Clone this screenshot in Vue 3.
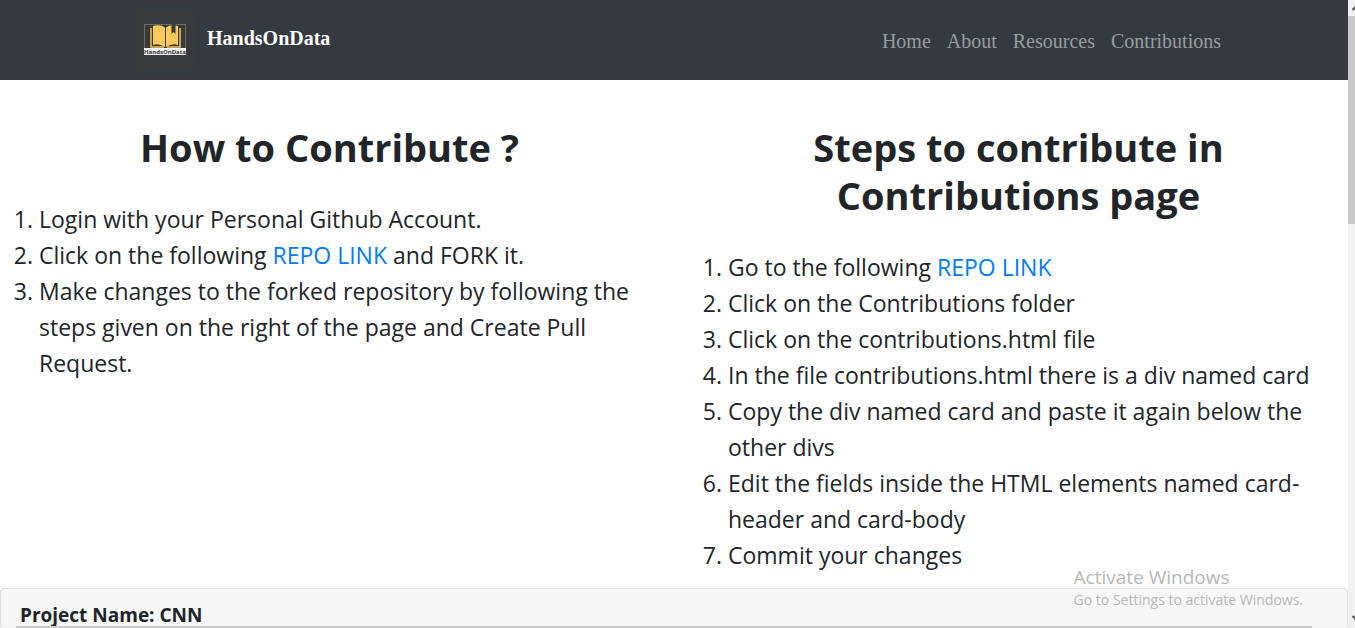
<script setup>
const links = ['Home', 'About', 'Resources', 'Contributions']
const steps = [
  'Click on the Contributions folder',
  'Click on the contributions.html file',
  'In the file contributions.html there is a div named card',
  'Copy the div named card and paste it again below the other divs',
  'Edit the fields inside the HTML elements named card-header and card-body',
  'Commit your changes',
]
</script>

<template>
  <div class="window">
    <div class="page">
      <header class="navbar">
        <div class="container">
          <a class="brand" href="#">
            <svg class="logo" viewBox="0 0 60 60" role="img" aria-label="HandsOnData logo">
              <rect width="60" height="60" fill="#393a3b" />
              <rect x="9.5" y="14.5" width="41" height="30" fill="#393a3b" stroke="#666a6d" />
              <path d="M16 18V37H29M45 18V37H32" fill="none" stroke="#f9c44f" stroke-width="1.5" />
              <path d="M18 16Q25 14 30 17.500V37Q24 33 18 35ZM31 17.500Q35 14 43 16V35Q37 33 31 37Z" fill="#fdc959" />
              <path d="M36.500 14h4v10l-2-2-2 2z" fill="#393a3b" />
              <rect x="9" y="38" width="42" height="7" fill="#f4f4f4" />
              <text x="30" y="43.500" text-anchor="middle" class="logo-text">HandsOnData</text>
            </svg>
            <span>HandsOnData</span>
          </a>
          <nav class="links">
            <a v-for="link in links" :key="link" href="#">{{ link }}</a>
          </nav>
        </div>
      </header>
      <main>
        <div class="columns">
          <section>
            <h1>How to Contribute ?</h1>
            <ol>
              <li>Login with your Personal Github Account.</li>
              <li>Click on the following <a href="#">REPO LINK</a> and FORK it.</li>
              <li>Make changes to the forked repository by following the steps given on the right of the page and Create Pull Request.</li>
            </ol>
          </section>
          <section>
            <h1>Steps to contribute in Contributions page</h1>
            <ol>
              <li>Go to the following <a href="#">REPO LINK</a></li>
              <li v-for="step in steps" :key="step">{{ step }}</li>
            </ol>
          </section>
        </div>
        <article class="card">
          <h2>Project Name: CNN</h2>
        </article>
      </main>
    </div>
    <div class="vbar">
      <svg viewBox="0 0 17 16" width="17" height="16"><path d="M4.500 10l4-4 4 4" fill="none" stroke="#505050" stroke-width="2" /></svg>
      <div class="track"><div class="vthumb"></div></div>
      <svg viewBox="0 0 17 16" width="17" height="16"><path d="M4.500 6l4 4 4-4" fill="none" stroke="#505050" stroke-width="2" /></svg>
    </div>
    <div class="hbar"><div class="hthumb"></div></div>
    <aside class="notice">
      <strong>Activate Windows</strong>
      <span>Go to Settings to activate Windows.</span>
    </aside>
  </div>
</template>

<style>
body {
  margin: 0;
}
</style>

<style scoped>
* {
  box-sizing: border-box;
}
.window {
  position: relative;
  display: grid;
  grid-template-columns: minmax(0, 1fr) 7px;
  grid-template-rows: minmax(0, 1fr) 2px;
  height: 100vh;
  overflow: hidden;
  color: #212529;
  background: #fff;
  font-family: "Open Sans", "Noto Sans", sans-serif;
}
a {
  color: #007bff;
  text-decoration: none;
}
.page {
  overflow: hidden;
}
.navbar {
  padding: 0 127px 0 135px;
  background: #343a40;
  font-family: "Liberation Serif", serif;
}
.container {
  display: flex;
  justify-content: space-between;
  align-items: center;
  height: 80px;
}
.brand {
  display: flex;
  align-items: center;
  gap: 12px;
  color: #fff;
  font-size: 20px;
  font-weight: 700;
}
.brand span {
  padding-bottom: 4px;
}
.logo {
  width: 60px;
  height: 60px;
}
.logo-text {
  font: 700 6px "Open Sans", sans-serif;
  fill: #333;
}
.links {
  display: flex;
  gap: 16px;
  padding-top: 2px;
}
.links a {
  color: #999c9f;
  font-size: 20px;
}
.columns {
  display: grid;
  grid-template-columns: 1fr 1fr;
  gap: 30px;
}
h1 {
  margin: 43px 60px 30px;
  font-size: 38px;
  line-height: 48px;
  text-align: center;
}
ol {
  margin: 0 0 15px;
  padding: 0 20px 0 39px;
  font-size: 23px;
  line-height: 36px;
}
.card {
  padding: 12px 19px;
  border: 1px solid #dfdfdf;
  border-radius: 4px;
  background: #f7f7f7;
}
h2 {
  margin: 0;
  font-size: 19px;
  line-height: 28px;
}
.vbar {
  display: flex;
  flex-direction: column;
  overflow: hidden;
  background: #f1f1f1;
}
.vbar svg {
  flex: none;
}
.track {
  flex: 1;
}
.vthumb {
  height: 35%;
  background: #c9c9c9;
}
.hbar {
  grid-column: 1 / -1;
  padding: 0 43px 0 16px;
  background: #f1f1f1;
}
.hthumb {
  height: 2px;
  background: #c9c9c9;
}
.notice {
  position: absolute;
  right: 52px;
  bottom: 17px;
  display: flex;
  flex-direction: column;
  color: #b8b8b8;
  font-size: 14px;
  line-height: 22px;
}
.notice strong {
  font-size: 19px;
  font-weight: 400;
  line-height: 24px;
}
</style>
